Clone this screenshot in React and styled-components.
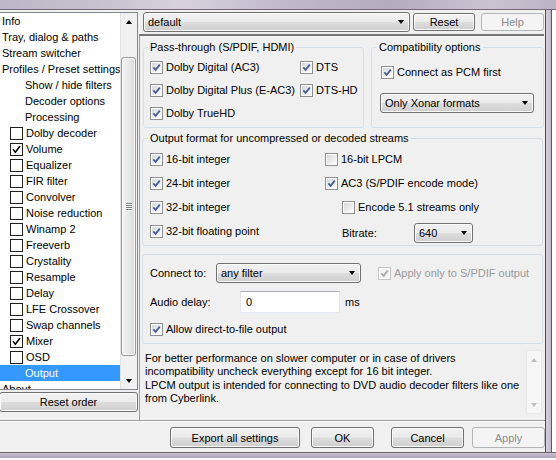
import React from "react";
import styled, { createGlobalStyle } from "styled-components";

const GlobalStyle = createGlobalStyle`
  html, body {
    margin: 0;
    padding: 0;
    background: #f0f0f0;
  }
  body {
    font-family: Tahoma, "Liberation Sans", Arial, sans-serif;
    font-size: 11px;
    color: #000;
  }
`;

const Window = styled.div`
  width: 556px;
  height: 460px;
  overflow: hidden;
  display: flex;
  flex-direction: column;
  background: #f0f0f0;
`;

const TopFrame = styled.div`
  flex: none;
  height: 9px;
  background: linear-gradient(
    90deg,
    #bdb6c6 0%,
    #c9c2d0 20%,
    #d9d2de 32%,
    #c2bacb 50%,
    #b4abbf 70%,
    #cbc3d1 88%,
    #bcb3c5 100%
  );
  border-bottom: 1px solid #6f6a75;
`;

const Body = styled.div`
  flex: none;
  height: 442px;
  display: flex;
`;

const Client = styled.div`
  width: 545px;
  display: flex;
  flex-direction: column;
`;

const RightFrame = styled.div`
  flex: 1;
  border-left: 1px solid #4f4c55;
  background: linear-gradient(
    90deg,
    #d6cfdc 0,
    #c4bacd 5px,
    #5d5963 5px,
    #5d5963 6px,
    #ffffff 6px
  );
`;

const BottomFrame = styled.div`
  flex: none;
  height: 8px;
  border-top: 1px solid #6b6670;
  background: linear-gradient(
    180deg,
    #c9bfd1 0,
    #b2a6bd 5px,
    #fdfdfd 5px
  );
`;

const Main = styled.div`
  height: 410px;
  display: flex;
`;

const LeftPane = styled.div`
  width: 139px;
  margin-left: -1px;
  padding-top: 2px;
  display: flex;
  flex-direction: column;
  gap: 2px;
`;

const ListBox = styled.div`
  box-sizing: border-box;
  height: 378px;
  border: 1px solid #828790;
  background: #fff;
  display: flex;
  overflow: hidden;
`;

const ListItems = styled.div`
  width: 120px;
  overflow: hidden;
`;

const ListItem = styled.div`
  height: 16px;
  display: flex;
  align-items: center;
  gap: 2px;
  padding-left: ${(p) => (p.$check ? 10 : p.$level ? 25 : 2)}px;
  white-space: nowrap;
  background: ${(p) => (p.$selected ? "#3399ff" : "transparent")};
  color: ${(p) => (p.$selected ? "#fff" : "#000")};
`;

const ClassicBox = styled.span`
  box-sizing: border-box;
  width: 13px;
  height: 13px;
  border: 1px solid #1f1f1f;
  background: #fff;
  display: flex;
  align-items: center;
  justify-content: center;
  margin-right: 1px;
`;

const ScrollBar = styled.div`
  box-sizing: border-box;
  width: ${(p) => p.$w || 17}px;
  display: flex;
  flex-direction: column;
  background: ${(p) => (p.$disabled ? "#f6f6f6" : "#f1f1f1")};
  border: ${(p) => (p.$disabled ? "1px solid #e9e9e9" : "none")};
  border-left: 1px solid ${(p) => (p.$disabled ? "#e9e9e9" : "#e4e4e4")};
`;

const ScrollButton = styled.div`
  flex: none;
  height: 17px;
  display: flex;
  align-items: center;
  justify-content: center;
`;

const ScrollArrow = styled.span`
  width: 0;
  height: 0;
  border-left: 3.5px solid transparent;
  border-right: 3.5px solid transparent;
  border-${(p) => (p.$up ? "bottom" : "top")}: 4px solid ${(p) => p.$color || "#000"};
`;

const ScrollTrack = styled.div`
  flex: 1;
  padding: 27px 1px 0 0;
`;

const Thumb = styled.div`
  box-sizing: border-box;
  height: 299px;
  border: 1px solid #979797;
  border-radius: 3px;
  background: linear-gradient(90deg, #f5f5f5 0%, #e7e7e7 55%, #d9d9d9 100%);
  box-shadow: inset 0 0 0 1px #fbfbfb;
  display: flex;
  flex-direction: column;
  align-items: center;
  justify-content: center;
  gap: 1px;
`;

const Grip = styled.span`
  width: 6px;
  height: 1px;
  background: #7d7d7d;
  box-shadow: 0 1px 0 #fff;
`;

const PushButton = styled.div`
  box-sizing: border-box;
  flex: none;
  width: ${(p) => p.$w}px;
  height: ${(p) => p.$h || 21}px;
  margin-left: ${(p) => p.$ml || 0}px;
  display: flex;
  align-items: center;
  justify-content: center;
  border: 1px solid ${(p) => (p.$disabled ? "#b3b7ba" : "#707070")};
  border-radius: 3px;
  color: ${(p) => (p.$disabled ? "#8c8c8c" : "#000")};
  background: ${(p) =>
    p.$disabled
      ? "#f4f4f4"
      : "linear-gradient(180deg, #f2f2f2 0%, #ebebeb 48%, #dddddd 52%, #cfcfcf 100%)"};
  box-shadow: ${(p) => (p.$disabled ? "none" : "inset 0 0 0 1px #fbfbfb")};
`;

const RightPane = styled.div`
  flex: 1;
  display: flex;
  flex-direction: column;
  padding-top: 2px;
`;

const TopRow = styled.div`
  height: 20px;
  display: flex;
  align-items: center;
  padding-left: 5px;
`;

const ComboBox = styled.div`
  box-sizing: border-box;
  flex: none;
  width: ${(p) => p.$w}px;
  height: 20px;
  margin-left: ${(p) => p.$ml || 0}px;
  margin-top: ${(p) => p.$mt || 0}px;
  padding: 0 5px 0 4px;
  display: flex;
  align-items: center;
  justify-content: space-between;
  border: 1px solid #707070;
  border-radius: 3px;
  background: linear-gradient(180deg, #f2f2f2 0%, #ebebeb 48%, #dddddd 52%, #cfcfcf 100%);
  box-shadow: inset 0 0 0 1px #fbfbfb;
  white-space: nowrap;
`;

const Panel = styled.div`
  flex: 1;
  margin: 2px 1px 0 1px;
  border-top: 2px solid #747474;
  border-left: 1px solid #9d9d9d;
  display: flex;
  flex-direction: column;
`;

const GroupRow = styled.div`
  display: flex;
  margin-top: 5px;
`;

const GroupBox = styled.fieldset`
  box-sizing: border-box;
  flex: none;
  min-width: 0;
  margin: ${(p) => p.$mt || 0}px 0 0 ${(p) => p.$ml || 0}px;
  padding: ${(p) => p.$pad || "0"};
  width: ${(p) => p.$w}px;
  height: ${(p) => p.$h}px;
  border: 1px solid #d5dfe5;
  border-radius: 3px;
`;

const Legend = styled.legend`
  margin-left: ${(p) => p.$ml}px;
  padding: 0 2px;
  line-height: 13px;
  font-size: 11px;
`;

const CheckGrid = styled.div`
  display: grid;
  grid-template-columns: ${(p) => p.$cols};
  grid-auto-rows: ${(p) => p.$row}px;
  padding: ${(p) => p.$pt || 2}px 0 0 ${(p) => p.$pl}px;
`;

const CheckLabel = styled.label`
  display: flex;
  align-items: center;
  gap: 3px;
  height: ${(p) => p.$h || 20}px;
  padding-left: ${(p) => p.$indent || 0}px;
  margin-top: ${(p) => p.$mt || 0}px;
  margin-left: ${(p) => p.$ml || 0}px;
  white-space: nowrap;
  color: ${(p) => (p.$disabled ? "#9b9b9b" : "#000")};
`;

const ThemedBox = styled.span`
  box-sizing: border-box;
  flex: none;
  width: 13px;
  height: 13px;
  display: flex;
  align-items: center;
  justify-content: center;
  border: 1px solid ${(p) => (p.$disabled ? "#c3c3c3" : "#8e8f8f")};
  background: ${(p) =>
    p.$disabled
      ? "#f4f4f4"
      : "linear-gradient(135deg, #d3d5d9 0%, #eeeeee 60%, #ffffff 100%)"};
  box-shadow: inset 0 0 0 1px #fdfdfd;
`;

const Inner = styled.div`
  display: flex;
  flex-direction: column;
  padding: ${(p) => p.$pad};
`;

const FieldRow = styled.div`
  display: flex;
  align-items: center;
  height: ${(p) => p.$h}px;
  margin-top: ${(p) => p.$mt || 0}px;
  padding-left: ${(p) => p.$indent || 0}px;
`;

const FieldLabel = styled.span`
  flex: none;
  width: ${(p) => p.$w}px;
  white-space: nowrap;
`;

const TextInput = styled.input`
  box-sizing: border-box;
  width: 100px;
  height: 22px;
  margin: 0;
  padding: 0 5px;
  font: inherit;
  color: #000;
  background: #fff;
  border: 1px solid #e3e9ef;
  border-top-color: #abadb3;
  border-left-color: #e2e3ea;
  outline: none;
`;

const Unit = styled.span`
  margin-left: 5px;
`;

const InfoRow = styled.div`
  display: flex;
  height: 64px;
  margin-top: 6px;
  padding-right: 2px;
`;

const InfoText = styled.div`
  flex: 1;
  padding: 2px 0 0 5px;
  line-height: 13.4px;
  white-space: nowrap;
  overflow: hidden;
`;

const Separator = styled.div`
  height: 1px;
  border-top: 1px solid #a0a0a0;
  background: #fff;
`;

const ButtonBar = styled.div`
  flex: 1;
  display: flex;
  padding: 5px 0 0 170px;
`;

const Check = ({ color = "#4a5e96", classic }) => (
  <svg width="9" height="9" viewBox="0 0 9 9">
    <path
      d={classic ? "M1 4.3 L3.4 7.2 L8 1" : "M1.3 4.4 L3.6 6.9 L7.8 1.6"}
      fill="none"
      stroke={color}
      strokeWidth={classic ? 1.5 : 1.8}
    />
  </svg>
);

const Box = ({ checked = true, disabled }) => (
  <ThemedBox $disabled={disabled}>
    {checked && <Check color={disabled ? "#a9a9a9" : "#4a5e96"} />}
  </ThemedBox>
);

const Option = ({ children, checked = true, disabled, ...rest }) => (
  <CheckLabel $disabled={disabled} {...rest}>
    <Box checked={checked} disabled={disabled} />
    {children}
  </CheckLabel>
);

const Arrow = () => <ScrollArrow />;

const navItems = [
  { label: "Info" },
  { label: "Tray, dialog & paths" },
  { label: "Stream switcher" },
  { label: "Profiles / Preset settings" },
  { label: "Show / hide filters", level: 1 },
  { label: "Decoder options", level: 1 },
  { label: "Processing", level: 1 },
  { label: "Dolby decoder", check: false },
  { label: "Volume", check: true },
  { label: "Equalizer", check: false },
  { label: "FIR filter", check: false },
  { label: "Convolver", check: false },
  { label: "Noise reduction", check: false },
  { label: "Winamp 2", check: false },
  { label: "Freeverb", check: false },
  { label: "Crystality", check: false },
  { label: "Resample", check: false },
  { label: "Delay", check: false },
  { label: "LFE Crossover", check: false },
  { label: "Swap channels", check: false },
  { label: "Mixer", check: true },
  { label: "OSD", check: false },
  { label: "Output", level: 1, selected: true },
  { label: "About" },
];

export default function App() {
  return (
    <Window>
      <GlobalStyle />
      <TopFrame />
      <Body>
        <Client>
          <Main>
            <LeftPane>
              <ListBox>
                <ListItems>
                  {navItems.map((item) => {
                    const hasCheck = item.check !== undefined;
                    return (
                      <ListItem
                        key={item.label}
                        $check={hasCheck}
                        $level={item.level}
                        $selected={item.selected}
                      >
                        {hasCheck && (
                          <ClassicBox>
                            {item.check && <Check classic color="#000" />}
                          </ClassicBox>
                        )}
                        {item.label}
                      </ListItem>
                    );
                  })}
                </ListItems>
                <ScrollBar>
                  <ScrollButton>
                    <ScrollArrow $up />
                  </ScrollButton>
                  <ScrollTrack>
                    <Thumb>
                      <Grip />
                      <Grip />
                      <Grip />
                      <Grip />
                    </Thumb>
                  </ScrollTrack>
                  <ScrollButton>
                    <ScrollArrow />
                  </ScrollButton>
                </ScrollBar>
              </ListBox>
              <PushButton $w={139} $h={20}>
                Reset order
              </PushButton>
            </LeftPane>

            <RightPane>
              <TopRow>
                <ComboBox $w={267}>
                  default
                  <Arrow />
                </ComboBox>
                <PushButton $w={62} $h={18} $ml={3}>
                  Reset
                </PushButton>
                <PushButton $w={63} $h={18} $ml={6} $disabled>
                  Help
                </PushButton>
              </TopRow>

              <Panel>
                <GroupRow>
                  <GroupBox $w={221} $h={87} $ml={3}>
                    <Legend $ml={4}>Pass-through (S/PDIF, HDMI)</Legend>
                    <CheckGrid $cols="150px auto" $row={23} $pl={6} $pt={3}>
                      <Option>Dolby Digital (AC3)</Option>
                      <Option>DTS</Option>
                      <Option>Dolby Digital Plus (E-AC3)</Option>
                      <Option>DTS-HD</Option>
                      <Option>Dolby TrueHD</Option>
                    </CheckGrid>
                  </GroupBox>
                  <GroupBox $w={173} $h={87} $ml={7}>
                    <Legend $ml={5}>Compatibility options</Legend>
                    <Inner $pad="0 0 0 9px">
                      <Option $mt={8}>Connect as PCM first</Option>
                      <ComboBox $w={154} $ml={-1} $mt={11}>
                        Only Xonar formats
                        <Arrow />
                      </ComboBox>
                    </Inner>
                  </GroupBox>
                </GroupRow>

                <GroupBox $w={401} $h={114} $ml={2} $mt={4}>
                  <Legend $ml={5}>
                    Output format for uncompressed or decoded streams
                  </Legend>
                  <CheckGrid $cols="175px auto" $row={24} $pl={7} $pt={4}>
                    <Option>16-bit integer</Option>
                    <Option checked={false}>16-bit LPCM</Option>
                    <Option>24-bit integer</Option>
                    <Option>AC3 (S/PDIF encode mode)</Option>
                    <Option>32-bit integer</Option>
                    <Option checked={false} $indent={17}>
                      Encode 5.1 streams only
                    </Option>
                    <Option>32-bit floating point</Option>
                    <FieldRow $h={24} $indent={17}>
                      <FieldLabel $w={72}>Bitrate:</FieldLabel>
                      <ComboBox $w={59}>
                        640
                        <Arrow />
                      </ComboBox>
                    </FieldRow>
                  </CheckGrid>
                </GroupBox>

                <GroupBox $w={401} $h={90} $ml={2} $mt={8} $pad="8px 0 0 7px">
                  <FieldRow $h={20}>
                    <FieldLabel $w={66}>Connect to:</FieldLabel>
                    <ComboBox $w={145}>
                      any filter
                      <Arrow />
                    </ComboBox>
                    <Option disabled $h={20} $ml={17}>
                      Apply only to S/PDIF output
                    </Option>
                  </FieldRow>
                  <FieldRow $h={22} $mt={8}>
                    <FieldLabel $w={90}>Audio delay:</FieldLabel>
                    <TextInput readOnly defaultValue="0" />
                    <Unit>ms</Unit>
                  </FieldRow>
                  <Option $h={18} $mt={7}>
                    Allow direct-to-file output
                  </Option>
                </GroupBox>

                <InfoRow>
                  <InfoText>
                    For better performance on slower computer or in case of drivers
                    <br />
                    incompatibility uncheck everything except for 16 bit integer.
                    <br />
                    LPCM output is intended for connecting to DVD audio decoder filters like one
                    <br />
                    from Cyberlink.
                  </InfoText>
                  <ScrollBar $disabled $w={16}>
                    <ScrollButton>
                      <ScrollArrow $up $color="#bdbdbd" />
                    </ScrollButton>
                    <ScrollTrack />
                    <ScrollButton>
                      <ScrollArrow $color="#bdbdbd" />
                    </ScrollButton>
                  </ScrollBar>
                </InfoRow>
              </Panel>
            </RightPane>
          </Main>

          <Separator />

          <ButtonBar>
            <PushButton $w={130}>Export all settings</PushButton>
            <PushButton $w={63} $ml={11}>
              OK
            </PushButton>
            <PushButton $w={73} $ml={17}>
              Cancel
            </PushButton>
            <PushButton $w={73} $ml={8} $disabled>
              Apply
            </PushButton>
          </ButtonBar>
        </Client>
        <RightFrame />
      </Body>
      <BottomFrame />
    </Window>
  );
}
